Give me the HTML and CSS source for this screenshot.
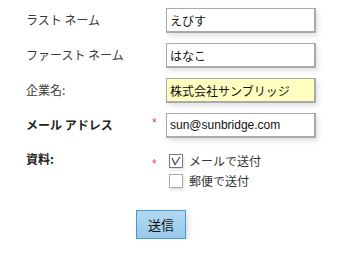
FILE: index.html
```html
<!DOCTYPE html>
<html lang="ja">
<head>
<meta charset="utf-8">
<link rel="stylesheet" href="styles.css">
</head>
<body>
<form class="form">
  <div class="row">
    <label class="lbl">ラスト ネーム</label>
    <span class="req"></span>
    <input class="field" type="text" value="えびす">
  </div>
  <div class="row">
    <label class="lbl">ファースト ネーム</label>
    <span class="req"></span>
    <input class="field" type="text" value="はなこ">
  </div>
  <div class="row">
    <label class="lbl">企業名:</label>
    <span class="req"></span>
    <input class="field field-hl" type="text" value="株式会社サンブリッジ">
  </div>
  <div class="row">
    <label class="lbl lbl-bold">メール アドレス</label>
    <span class="req">*</span>
    <input class="field" type="text" value="sun@sunbridge.com">
  </div>
  <div class="row row-check">
    <label class="lbl lbl-bold">資料:</label>
    <span class="req">*</span>
    <div class="checks">
      <label class="check"><span class="box box-on"><svg width="12" height="12" viewBox="0 0 12 12"><path d="M2 3 L5 9.5 L10 2" fill="none" stroke="#4a4a6a" stroke-width="1.3"/></svg></span><span class="ctext">メールで送付</span></label>
      <label class="check"><span class="box"></span><span class="ctext">郵便で送付</span></label>
    </div>
  </div>
  <div class="actions">
    <button class="btn" type="button">送信</button>
  </div>
</form>
</body>
</html>
```
FILE: styles.css
```css
html, body {
  margin: 0;
  padding: 0;
  background: #ffffff;
}
body {
  font-family: "Noto Sans CJK JP", "Liberation Sans", sans-serif;
  color: #333333;
}
.form {
  padding: 8px 0 0 26px;
  display: flex;
  flex-direction: column;
  gap: 10px;
}
.row {
  display: grid;
  grid-template-columns: 126px 14px 150px;
  align-items: start;
}
.lbl {
  font-size: 12px;
  line-height: 16px;
  padding-top: 4px;
  color: #3a3a3a;
}
.lbl-bold {
  font-weight: bold;
  color: #222;
}
.req {
  color: #e0457a;
  font-size: 12px;
  line-height: 14px;
  padding-top: 3px;
  font-family: "Liberation Sans", sans-serif;
}
.field {
  box-sizing: border-box;
  width: 150px;
  height: 25px;
  margin: 0;
  padding: 0 3px;
  border: 1px solid #aaaaaa;
  border-width: 1px 2px 2px 1px;
  background: #ffffff;
  box-shadow: 2px 3px 5px rgba(0, 0, 0, 0.12);
  font-family: "Liberation Sans", "Noto Sans CJK JP", sans-serif;
  font-size: 12px;
  color: #111;
  outline: none;
}
.field-hl {
  background: #ffffc0;
}
.row-check {
  margin-top: 6px;
}
.row-check .lbl {
  padding-top: 0;
  margin-top: -3px;
}
.checks {
  display: flex;
  flex-direction: column;
  gap: 6px;
  padding-left: 3px;
}
.check {
  display: flex;
  align-items: center;
  gap: 6px;
  font-size: 12px;
  line-height: 14px;
  color: #333;
}
.box {
  box-sizing: border-box;
  width: 14px;
  height: 14px;
  border: 1px solid #aaaaaa;
  background: #fff;
  box-shadow: 1px 2px 3px rgba(0, 0, 0, 0.12);
  display: flex;
  align-items: center;
  justify-content: center;
}
.box-on {
  border-color: #7a7a7a;
}
.actions {
  padding-left: 110px;
  margin-top: 12px;
}
.btn {
  width: 50px;
  height: 29px;
  border: 1px solid #3f9ad6;
  background: linear-gradient(#b4d7f0, #98c9ea);
  box-shadow: 2px 3px 6px rgba(0, 0, 0, 0.15);
  font-family: "Noto Sans CJK JP", sans-serif;
  font-size: 13px;
  color: #111;
  padding: 0;
}
```
